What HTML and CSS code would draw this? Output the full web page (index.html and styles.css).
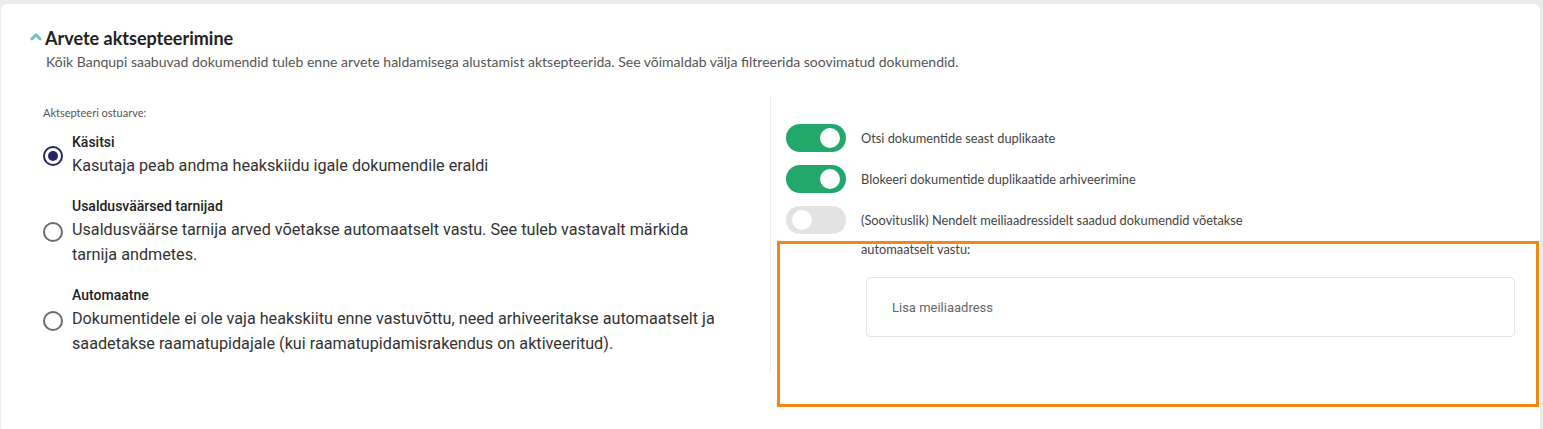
FILE: index.html
```html
<!DOCTYPE html>
<html lang="et">
<head>
    <meta charset="UTF-8">
    <meta name="viewport" content="width=device-width, initial-scale=1.0">
    <title>Arvete aktsepteerimine</title>
    <link rel="stylesheet" href="styles.css">
</head>
<body>

    <div class="card">
        <div class="head">
            <div class="title-row">
                <svg class="chevron" width="12" height="9" viewBox="0 0 12 9">
                    <path d="M1.8 7 L6 2.8 L10.2 7" fill="none" stroke="#6cc4b6" stroke-width="2.8" stroke-linecap="round" stroke-linejoin="round"/>
                </svg>
                <h2>Arvete aktsepteerimine</h2>
            </div>
            <p class="desc">Kõik Banqupi saabuvad dokumendid tuleb enne arvete haldamisega alustamist aktsepteerida. See võimaldab välja filtreerida soovimatud dokumendid.</p>
        </div>

        <div class="cols">
            <div class="col-left">
                <div class="small-label">Aktsepteeri ostuarve:</div>

                <label class="option">
                    <span class="radio checked"></span>
                    <span class="option-text">
                        <span class="option-title">Käsitsi</span>
                        <span class="option-desc">Kasutaja peab andma heakskiidu igale dokumendile eraldi</span>
                    </span>
                </label>

                <label class="option">
                    <span class="radio"></span>
                    <span class="option-text">
                        <span class="option-title">Usaldusväärsed tarnijad</span>
                        <span class="option-desc">Usaldusväärse tarnija arved võetakse automaatselt vastu. See tuleb vastavalt märkida tarnija andmetes.</span>
                    </span>
                </label>

                <label class="option">
                    <span class="radio"></span>
                    <span class="option-text">
                        <span class="option-title">Automaatne</span>
                        <span class="option-desc">Dokumentidele ei ole vaja heakskiitu enne vastuvõttu, need arhiveeritakse automaatselt ja saadetakse raamatupidajale (kui raamatupidamisrakendus on aktiveeritud).</span>
                    </span>
                </label>
            </div>

            <div class="col-right">
                <div class="toggle-row">
                    <span class="toggle on"><span class="knob"></span></span>
                    <span class="toggle-label">Otsi dokumentide seast duplikaate</span>
                </div>
                <div class="toggle-row">
                    <span class="toggle on"><span class="knob"></span></span>
                    <span class="toggle-label">Blokeeri dokumentide duplikaatide arhiveerimine</span>
                </div>
                <div class="toggle-row">
                    <span class="toggle"><span class="knob"></span></span>
                    <span class="toggle-label">(Soovituslik) Nendelt meiliaadressidelt saadud dokumendid võetakse automaatselt vastu:</span>
                </div>
                <input class="email-input" type="text" placeholder="Lisa meiliaadress">
            </div>
        </div>

        <div class="highlight"></div>
    </div>

</body>
</html>
```

FILE: styles.css
```css
body {
    margin: 0;
    background: #ebebeb;
    font-family: Lato, "Open Sans", Arial, sans-serif;
    color: #333;
}
.card {
    position: relative;
    background: white;
    margin: 4px 3px 0 1px;
    border-radius: 6px;
    padding-top: 23px;
    height: 440px;
    box-sizing: border-box;
}
.head {
    padding-left: 29px;
}
.title-row {
    display: flex;
    align-items: center;
    gap: 3px;
}
.chevron {
    display: block;
    margin-top: -3px;
}
h2 {
    margin: 0;
    font-size: 18px;
    line-height: 22px;
    font-weight: 700;
    color: #222;
}
.desc {
    margin: 3px 0 0 16px;
    font-size: 14px;
    line-height: 20px;
    color: #555;
}
.cols {
    display: flex;
    align-items: flex-start;
    margin-top: 23px;
}
.col-left {
    width: 769px;
    box-sizing: border-box;
    padding: 10px 40px 0 42px;
}
.small-label {
    font-size: 11px;
    line-height: 16px;
    color: #555;
    margin-bottom: 12px;
}
.option {
    display: flex;
    align-items: center;
    gap: 9px;
    margin-bottom: 19px;
    font-family: Roboto, Arial, sans-serif;
}
.radio {
    flex: none;
    width: 20px;
    height: 20px;
    border: 2px solid #6b6b6b;
    border-radius: 50%;
    box-sizing: border-box;
    position: relative;
}
.radio.checked {
    border-color: #2a2463;
}
.radio.checked::after {
    content: "";
    position: absolute;
    left: 3px;
    top: 3px;
    width: 10px;
    height: 10px;
    border-radius: 50%;
    background: #2a2463;
}
.option-text {
    display: flex;
    flex-direction: column;
    gap: 2px;
}
.option-title {
    font-size: 14px;
    line-height: 18px;
    font-weight: 500;
    color: #222;
}
.option-desc {
    font-size: 16.2px;
    line-height: 25px;
    color: #333;
}
.col-right {
    flex: 1;
    border-left: 1px solid #ececec;
    padding: 29px 25px 36px 15px;
}
.toggle-row {
    display: flex;
    align-items: flex-start;
    gap: 15px;
    margin-bottom: 13px;
}
.toggle {
    flex: none;
    width: 60px;
    height: 28px;
    border-radius: 14px;
    background: #e3e3e3;
    position: relative;
}
.toggle.on {
    background: #22a86a;
}
.knob {
    position: absolute;
    top: 4px;
    left: 6px;
    width: 20px;
    height: 20px;
    border-radius: 50%;
    background: white;
}
.toggle.on .knob {
    left: 34px;
}
.toggle-label {
    font-size: 12.8px;
    line-height: 28px;
    color: #444;
    max-width: 400px;
}
.toggle-row:last-of-type .toggle-label {
    line-height: 29px;
}
.email-input {
    display: block;
    box-sizing: border-box;
    width: calc(100% - 80px);
    height: 60px;
    margin: 0 0 0 80px;
    padding: 0 25px;
    border: 1px solid #e4e4e4;
    border-radius: 4px;
    font-family: Roboto, Arial, sans-serif;
    font-size: 13px;
    color: #333;
    outline: none;
}
.email-input::placeholder {
    color: #666;
}
.highlight {
    position: absolute;
    left: 776px;
    top: 237px;
    width: 762px;
    height: 166px;
    box-sizing: border-box;
    border: 3px solid #f5860f;
    pointer-events: none;
}
```
